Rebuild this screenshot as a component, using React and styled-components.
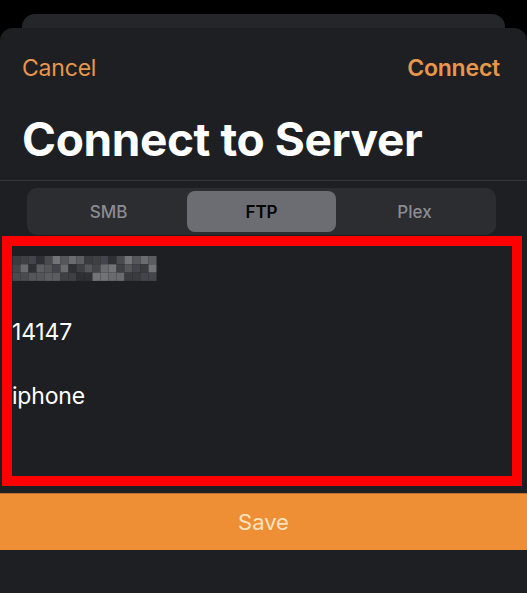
import React from 'react';
import styled, { createGlobalStyle } from 'styled-components';

const Global = createGlobalStyle`
  html, body {
    margin: 0;
    padding: 0;
    background: #000;
  }
  * {
    box-sizing: border-box;
  }
`

const Page = styled.div`
  width: 527px;
  height: 593px;
  background: #000;
  padding-top: 14px;
  display: flex;
  flex-direction: column;
  overflow: hidden;
  font-family: Inter, "Liberation Sans", sans-serif;
`
const BackCard = styled.div`
  height: 14px;
  margin: 0 22px;
  background: #25262a;
  border-radius: 13px 13px 0 0;
`
const Sheet = styled.div`
  flex: 1;
  background: #1e1f23;
  border-radius: 13px 13px 0 0;
  display: flex;
  flex-direction: column;
`
const NavBar = styled.div`
  height: 80px;
  padding: 0 27px 0 22px;
  display: flex;
  align-items: center;
  justify-content: space-between;
`
const NavButton = styled.span`
  color: #e8964b;
  font-size: 23px;
  font-weight: ${p => (p.$bold ? 600 : 400)};
  letter-spacing: -0.2px;
`
const Title = styled.h1`
  margin: 0;
  height: 72px;
  padding: 3px 22px 0;
  color: #fff;
  font-size: 46px;
  font-weight: 700;
  line-height: 56px;
  letter-spacing: -0.4px;
`
const Divider = styled.div`
  height: 1px;
  background: #35363a;
`
const SegmentWrap = styled.div`
  padding: 7px 31px 0 27px;
`
const Segmented = styled.div`
  height: 47px;
  background: #2c2d31;
  border-radius: 10px;
  padding: 3px;
  display: grid;
  grid-template-columns: 1fr 149px 1fr;
`
const Segment = styled.div`
  display: flex;
  align-items: center;
  justify-content: center;
  border-radius: 8px;
  font-size: 17px;
  font-weight: ${p => (p.$active ? 600 : 500)};
  color: ${p => (p.$active ? '#050505' : '#8b8c91')};
  background: ${p => (p.$active ? '#6c6d72' : 'transparent')};
`
const Fields = styled.div`
  margin: 1px 5px 0 2px;
  height: 250px;
  border: 10px solid #ff0000;
  display: flex;
  flex-direction: column;
  gap: 20px;
`
const Field = styled.div`
  height: 44px;
  display: flex;
  align-items: center;
  color: #fff;
  font-size: 23px;
  letter-spacing: -0.2px;
`
const SaveButton = styled.div`
  margin-top: 7px;
  height: 57px;
  background: #ee8f36;
  border-top: 1px solid #b86f30;
  display: flex;
  align-items: center;
  justify-content: center;
  color: #fde3bf;
  font-size: 22px;
`

const shades = [
  '#3a3b3f', '#4a4b4f', '#5c5d61', '#2f3034', '#6a6b6f', '#44454a', '#55565a', '#3f4044', '#727377',
]

const Pixelated = () => {
  const cols = 18;
  const rows = 3;
  const rects = [];
  for (let r = 0; r < rows; r++) {
    for (let c = 0; c < cols; c++) {
      const i = (c * 7 + r * 5 + ((c * r) % 4)) % shades.length;
      rects.push(<rect key={r + '-' + c} x={c * 8} y={r * 8.3} width={8} height={8.3} fill={shades[i]} />);
    }
  }
  return (
    <svg width="145" height="25" viewBox="0 0 144 25">
      {rects}
    </svg>
  )
}

export default function App() {
  return (
    <Page>
      <Global />
      <BackCard />
      <Sheet>
        <NavBar>
          <NavButton>Cancel</NavButton>
          <NavButton $bold>Connect</NavButton>
        </NavBar>
        <Title>Connect to Server</Title>
        <Divider />
        <SegmentWrap>
          <Segmented>
            <Segment>SMB</Segment>
            <Segment $active>FTP</Segment>
            <Segment>Plex</Segment>
          </Segmented>
        </SegmentWrap>
        <Fields>
          <Field><Pixelated /></Field>
          <Field>14147</Field>
          <Field>iphone</Field>
        </Fields>
        <SaveButton>Save</SaveButton>
      </Sheet>
    </Page>
  )
}
